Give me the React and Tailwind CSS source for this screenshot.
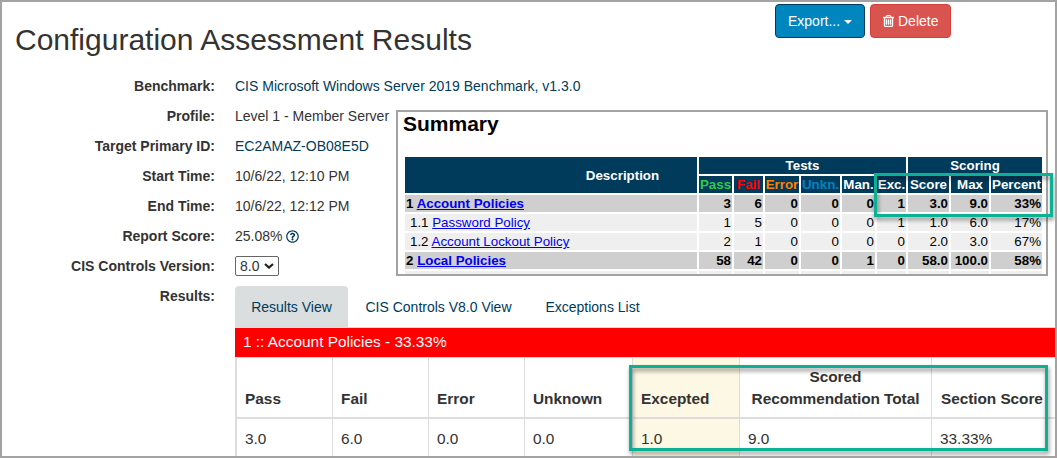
import React from "react";
import { FaRegQuestionCircle } from "react-icons/fa";

const policies = [
  { num: "1", name: "Account Policies", top: true, cells: ["3", "6", "0", "0", "0", "1", "3.0", "9.0", "33%"] },
  { num: "1.1", name: "Password Policy", cells: ["1", "5", "0", "0", "0", "1", "1.0", "6.0", "17%"] },
  { num: "1.2", name: "Account Lockout Policy", cells: ["2", "1", "0", "0", "0", "0", "2.0", "3.0", "67%"] },
  { num: "2", name: "Local Policies", top: true, cells: ["58", "42", "0", "0", "1", "0", "58.0", "100.0", "58%"] },
];

const columns = [
  ["Pass", "text-[#2ecc40]"],
  ["Fail", "text-[#ff0000]"],
  ["Error", "text-[#ff8000]"],
  ["Unkn.", "text-[#0084c0]"],
  ["Man.", "text-white"],
  ["Exc.", "text-white"],
  ["Score", "text-white"],
  ["Max", "text-white"],
  ["Percent", "text-white"],
];

function TrashIcon() {
  return (
    <svg viewBox="192 128 1408 1536" className="h-3 w-[11px]" fill="currentColor" stroke="currentColor" strokeWidth="50">
      <path d="M704 736v576q0 14-9 23t-23 9h-64q-14 0-23-9t-9-23v-576q0-14 9-23t23-9h64q14 0 23 9t9 23zm256 0v576q0 14-9 23t-23 9h-64q-14 0-23-9t-9-23v-576q0-14 9-23t23-9h64q14 0 23 9t9 23zm256 0v576q0 14-9 23t-23 9h-64q-14 0-23-9t-9-23v-576q0-14 9-23t23-9h64q14 0 23 9t9 23zm128 724v-948h-896v948q0 22 7 40.5t14.5 27 10.5 8.5h832q3 0 10.5-8.5t14.5-27 7-40.5zm-672-1076h448l-48-117q-7-9-17-11h-317q-10 2-17 11zm928 32v64q0 14-9 23t-23 9h-96v948q0 83-47 143.5t-113 60.5h-832q-66 0-113-58.5t-47-141.5v-952h-96q-14 0-23-9t-9-23v-64q0-14 9-23t23-9h309l70-167q15-37 54-63t79-26h320q40 0 79 26t54 63l70 167h309q14 0 23 9t9 23z" />
    </svg>
  );
}

function Row({ label, children, className = "" }) {
  return (
    <div className={"flex h-[30px] items-center " + className}>
      <div className="w-[213px] text-right font-bold">{label}</div>
      <div className="ml-5 flex items-center whitespace-nowrap">{children}</div>
    </div>
  );
}

function Summary() {
  return (
    <section className="absolute left-[394px] top-[108px] h-[166px] w-[652px] overflow-hidden border-2 border-[#a3a3a3] bg-white text-[13.33px] text-black">
      <h2 className="ml-[5px] h-[45px] text-[21px] leading-[24px] font-bold">Summary</h2>
      <div className="ml-[7px] grid w-[637px] auto-rows-[17px] grid-cols-[292px_33px_29px_34px_39px_33px_29px_41px_38px_51px] gap-[2px] leading-[17px] whitespace-nowrap">
        <div className="row-span-2 flex items-center justify-center bg-[#003b5c] pl-[143px] font-bold text-white">Description</div>
        <div className="col-span-6 bg-[#003b5c] text-center font-bold text-white">Tests</div>
        <div className="col-span-3 bg-[#003b5c] text-center font-bold text-white">Scoring</div>
        {columns.map(([name, color]) => (
          <div key={name} className={"flex justify-center bg-[#003b5c] font-bold " + color}>{name}</div>
        ))}
        {policies.map((p) => {
          const tone = p.top ? "bg-[#cfcfcf] font-bold" : "bg-[#efefef]";
          return (
            <React.Fragment key={p.num}>
              <div className={tone + (p.top ? " pl-px" : " pl-[5px]")}>
                {p.num} <a className="text-[#0000ee] underline">{p.name}</a>
              </div>
              {p.cells.map((c, i) => (
                <div key={i} className={"pr-px text-right " + tone}>{c}</div>
              ))}
            </React.Fragment>
          );
        })}
        {["d", ...columns.map((c) => c[0])].map((k) => (
          <div key={k} className="bg-[#efefef]" />
        ))}
      </div>
    </section>
  );
}

function ResultsTable() {
  const head = "flex items-end border-r border-[#ddd] pb-[7px] pl-2 font-bold";
  const cell = "flex items-center border-r border-[#ddd] pt-px pl-2";
  return (
    <div className="grid w-[820px] grid-cols-[96px_96px_96px_108px_107px_192px_123px] grid-rows-[61px_38px] border-t border-l-2 border-[#ddd] text-[15.4px] leading-[22px] whitespace-nowrap">
      <div className={head + " border-b-2"}>Pass</div>
      <div className={head + " border-b-2"}>Fail</div>
      <div className={head + " border-b-2"}>Error</div>
      <div className={head + " border-b-2"}>Unknown</div>
      <div className={head + " border-b-2 bg-[#fcf8e3]"}>Excepted</div>
      <div className={head + " justify-center border-b-2 pr-2 text-center tracking-[-0.06px]"}>
        <span>Scored<br />Recommendation Total</span>
      </div>
      <div className={head + " border-b-2 border-r-0 pl-[9px] tracking-[-0.06px]"}>Section Score</div>
      <div className={cell}>3.0</div>
      <div className={cell}>6.0</div>
      <div className={cell}>0.0</div>
      <div className={cell}>0.0</div>
      <div className={cell + " bg-[#fcf8e3]"}>1.0</div>
      <div className={cell}>9.0</div>
      <div className={cell + " border-r-0"}>33.33%</div>
    </div>
  );
}

export default function App() {
  return (
    <main className="relative h-[458px] w-[1057px] overflow-hidden border-2 border-[#a3a3a3] bg-white font-['Liberation_Sans',Arial,sans-serif] text-[14px] leading-5 text-[#333]">
      <header className="flex h-[69px] justify-between pt-[2px] pr-[104px] pl-[13px]">
        <h1 className="mt-[19px] text-[30px] leading-[33px]">Configuration Assessment Results</h1>
        <div className="flex h-[34px] gap-[5px] text-white">
          <button className="flex w-[90px] items-center rounded-[4px] border border-[#003b5c] bg-[#0086bf] pl-3">
            Export...
            <svg viewBox="0 0 8 4" className="mt-[2px] ml-1 h-1 w-2" fill="currentColor"><path d="M0 0h8L4 4z" /></svg>
          </button>
          <button className="flex w-[81px] items-center gap-1 rounded-[4px] border border-[#d43f3a] bg-[#d9534f] pl-3">
            <TrashIcon />
            Delete
          </button>
        </div>
      </header>
      <Row label="Benchmark:"><a className="text-[#003b5c]">CIS Microsoft Windows Server 2019 Benchmark, v1.3.0</a></Row>
      <Row label="Profile:">Level 1 - Member Server</Row>
      <Row label="Target Primary ID:"><a className="text-[#003b5c]">EC2AMAZ-OB08E5D</a></Row>
      <Row label="Start Time:">10/6/22, 12:10 PM</Row>
      <Row label="End Time:">10/6/22, 12:12 PM</Row>
      <Row label="Report Score:">
        25.08%
        <FaRegQuestionCircle className="ml-1 size-[13px] text-[#003b5c]" />
      </Row>
      <Row label="CIS Controls Version:">
        <button className="flex h-5 w-11 items-center rounded-[2px] border border-[#666] pl-1">
          8.0
          <svg viewBox="0 0 10 6" className="ml-[5px] h-[6px] w-[10px]" fill="none" stroke="#222" strokeWidth="2.2"><path d="M1 1l4 3.6 4-3.6" /></svg>
        </button>
      </Row>
      <div className="flex">
        <div className="w-[213px] pt-[5px] text-right font-bold">Results:</div>
        <div className="ml-5 w-[820px] pt-[5px]">
          <nav className="flex h-[42px] border-b border-[#ddd] text-[#003b5c]">
            <a className="flex h-[41px] w-[113px] items-center justify-center rounded-t-[4px] bg-[#dadede]">Results View</a>
            <a className="flex h-[41px] w-[181px] items-center justify-center">CIS Controls V8.0 View</a>
            <a className="flex h-[41px] w-[127px] items-center justify-center">Exceptions List</a>
          </nav>
          <div className="h-[29px] bg-[#ff0000] pl-2 text-[15.4px] leading-[28px] text-white">1 :: Account Policies - 33.33%</div>
          <ResultsTable />
        </div>
      </div>
      <Summary />
      <div className="absolute left-[872px] top-[171px] h-[44px] w-[179px] border-3 border-[#0cb092] drop-shadow-[1px_3px_2px_rgba(0,0,0,0.45)]" />
      <div className="absolute left-[627px] top-[363px] h-[86px] w-[419px] border-3 border-[#0cb092] drop-shadow-[1px_3px_2px_rgba(0,0,0,0.45)]" />
    </main>
  );
}
